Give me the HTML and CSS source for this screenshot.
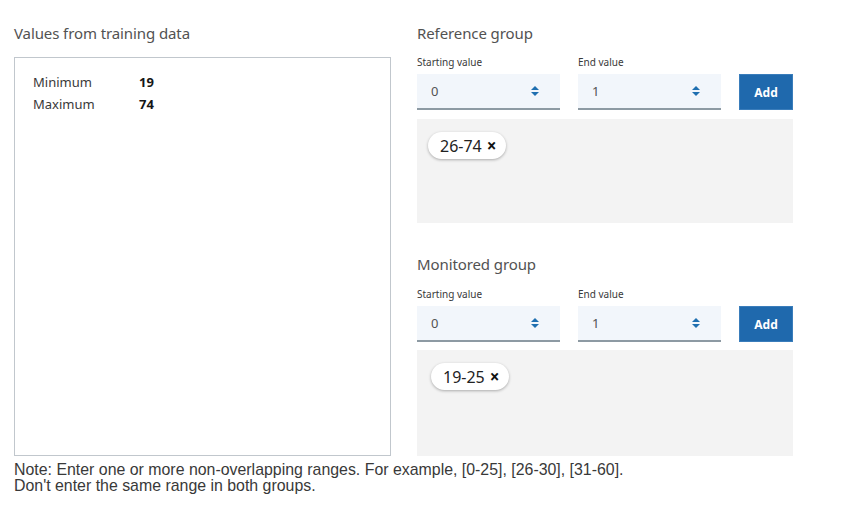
FILE: index.html
```html
<!DOCTYPE html>
<html>
<head>
<meta charset="utf-8">
<link rel="stylesheet" href="styles.css">
</head>
<body>
<div class="page">
  <div class="main">
    <div class="left">
      <div class="title">Values from training data</div>
      <div class="stats">
        <div class="stat"><span class="stat-label">Minimum</span><span class="stat-value">19</span></div>
        <div class="stat"><span class="stat-label">Maximum</span><span class="stat-value">74</span></div>
      </div>
    </div>
    <div class="right">
      <div class="group">
        <div class="title">Reference group</div>
        <div class="controls">
          <div class="field">
            <div class="label">Starting value</div>
            <div class="input"><span>0</span><svg class="spin" width="10" height="12" viewBox="0 0 10 12"><path d="M1 5 L5 1 L9 5 Z M1 7 L9 7 L5 11 Z" fill="#1f6fb0"/></svg></div>
          </div>
          <div class="field">
            <div class="label">End value</div>
            <div class="input"><span>1</span><svg class="spin" width="10" height="12" viewBox="0 0 10 12"><path d="M1 5 L5 1 L9 5 Z M1 7 L9 7 L5 11 Z" fill="#1f6fb0"/></svg></div>
          </div>
          <button class="add">Add</button>
        </div>
        <div class="tags tags-ref">
          <span class="chip">26-74 <span class="x">×</span></span>
        </div>
      </div>
      <div class="group group2">
        <div class="title">Monitored group</div>
        <div class="controls">
          <div class="field">
            <div class="label">Starting value</div>
            <div class="input"><span>0</span><svg class="spin" width="10" height="12" viewBox="0 0 10 12"><path d="M1 5 L5 1 L9 5 Z M1 7 L9 7 L5 11 Z" fill="#1f6fb0"/></svg></div>
          </div>
          <div class="field">
            <div class="label">End value</div>
            <div class="input"><span>1</span><svg class="spin" width="10" height="12" viewBox="0 0 10 12"><path d="M1 5 L5 1 L9 5 Z M1 7 L9 7 L5 11 Z" fill="#1f6fb0"/></svg></div>
          </div>
          <button class="add">Add</button>
        </div>
        <div class="tags tags-mon">
          <span class="chip">19-25 <span class="x">×</span></span>
        </div>
      </div>
    </div>
  </div>
  <div class="note">Note: Enter one or more non-overlapping ranges. For example, [0-25], [26-30], [31-60].<br>Don't enter the same range in both groups.</div>
</div>
</body>
</html>
```

FILE: styles.css
```css
html, body {
  margin: 0;
  padding: 0;
  background: #ffffff;
}
body {
  font-family: "Noto Sans", "Open Sans", sans-serif;
  color: #161616;
}
.page {
  padding: 23px 0 0 14px;
}
.main {
  display: flex;
  gap: 26px;
}
.left {
  width: 377px;
  display: flex;
  flex-direction: column;
}
.title {
  font-size: 15px;
  line-height: 20px;
  height: 20px;
  color: #525252;
  font-weight: 400;
  letter-spacing: -0.1px;
}
.left .title {
  margin-bottom: 14px;
}
.stats {
  border: 1px solid #c1c7cd;
  padding: 13px 0 0 18px;
  box-sizing: border-box;
  height: 399px;
}
.stat {
  display: flex;
  font-size: 13px;
  line-height: 22px;
  color: #393939;
}
.stat-label {
  width: 106px;
}
.stat-value {
  font-weight: 700;
  color: #161616;
}
.right {
  width: 376px;
  display: flex;
  flex-direction: column;
}
.group2 {
  margin-top: 31px;
}
.controls {
  display: flex;
  align-items: flex-end;
  gap: 18px;
  margin-top: 12px;
}
.field {
  width: 143px;
  display: flex;
  flex-direction: column;
}
.label {
  font-size: 10px;
  line-height: 14px;
  color: #393939;
  margin-bottom: 5px;
}
.input {
  height: 36px;
  background: #f2f6fb;
  border-bottom: 2px solid #8d9aa3;
  box-sizing: border-box;
  display: flex;
  align-items: center;
  justify-content: space-between;
  padding: 0 20px 0 14px;
  font-size: 13px;
  color: #525252;
}
.spin {
  display: block;
}
.add {
  width: 54px;
  height: 36px;
  background: #1f69ad;
  border: 1px solid #3a7dbb;
  color: #ffffff;
  font-family: "Noto Sans", sans-serif;
  font-weight: 700;
  font-size: 12px;
  padding: 0;
  margin: 0;
}
.tags {
  margin-top: 9px;
  background: #f3f3f3;
  padding: 13px 0 0 11px;
  box-sizing: border-box;
}
.tags-ref {
  height: 104px;
}
.group2 .controls {
  margin-top: 13px;
}
.tags-mon {
  height: 106px;
  margin-top: 8px;
  padding-left: 14px;
}
.chip {
  display: inline-flex;
  align-items: center;
  height: 27px;
  padding: 0 9px 0 12px;
  background: #ffffff;
  border-radius: 14px;
  box-shadow: 0 1px 3px rgba(0, 0, 0, 0.3);
  font-size: 16px;
  color: #222222;
  gap: 5px;
}
.x {
  font-weight: 700;
  font-size: 17px;
  color: #111111;
}
.note {
  margin-top: 6px;
  font-family: "Liberation Sans", Arial, sans-serif;
  font-size: 15.9px;
  line-height: 16px;
  color: #393939;
}
```
